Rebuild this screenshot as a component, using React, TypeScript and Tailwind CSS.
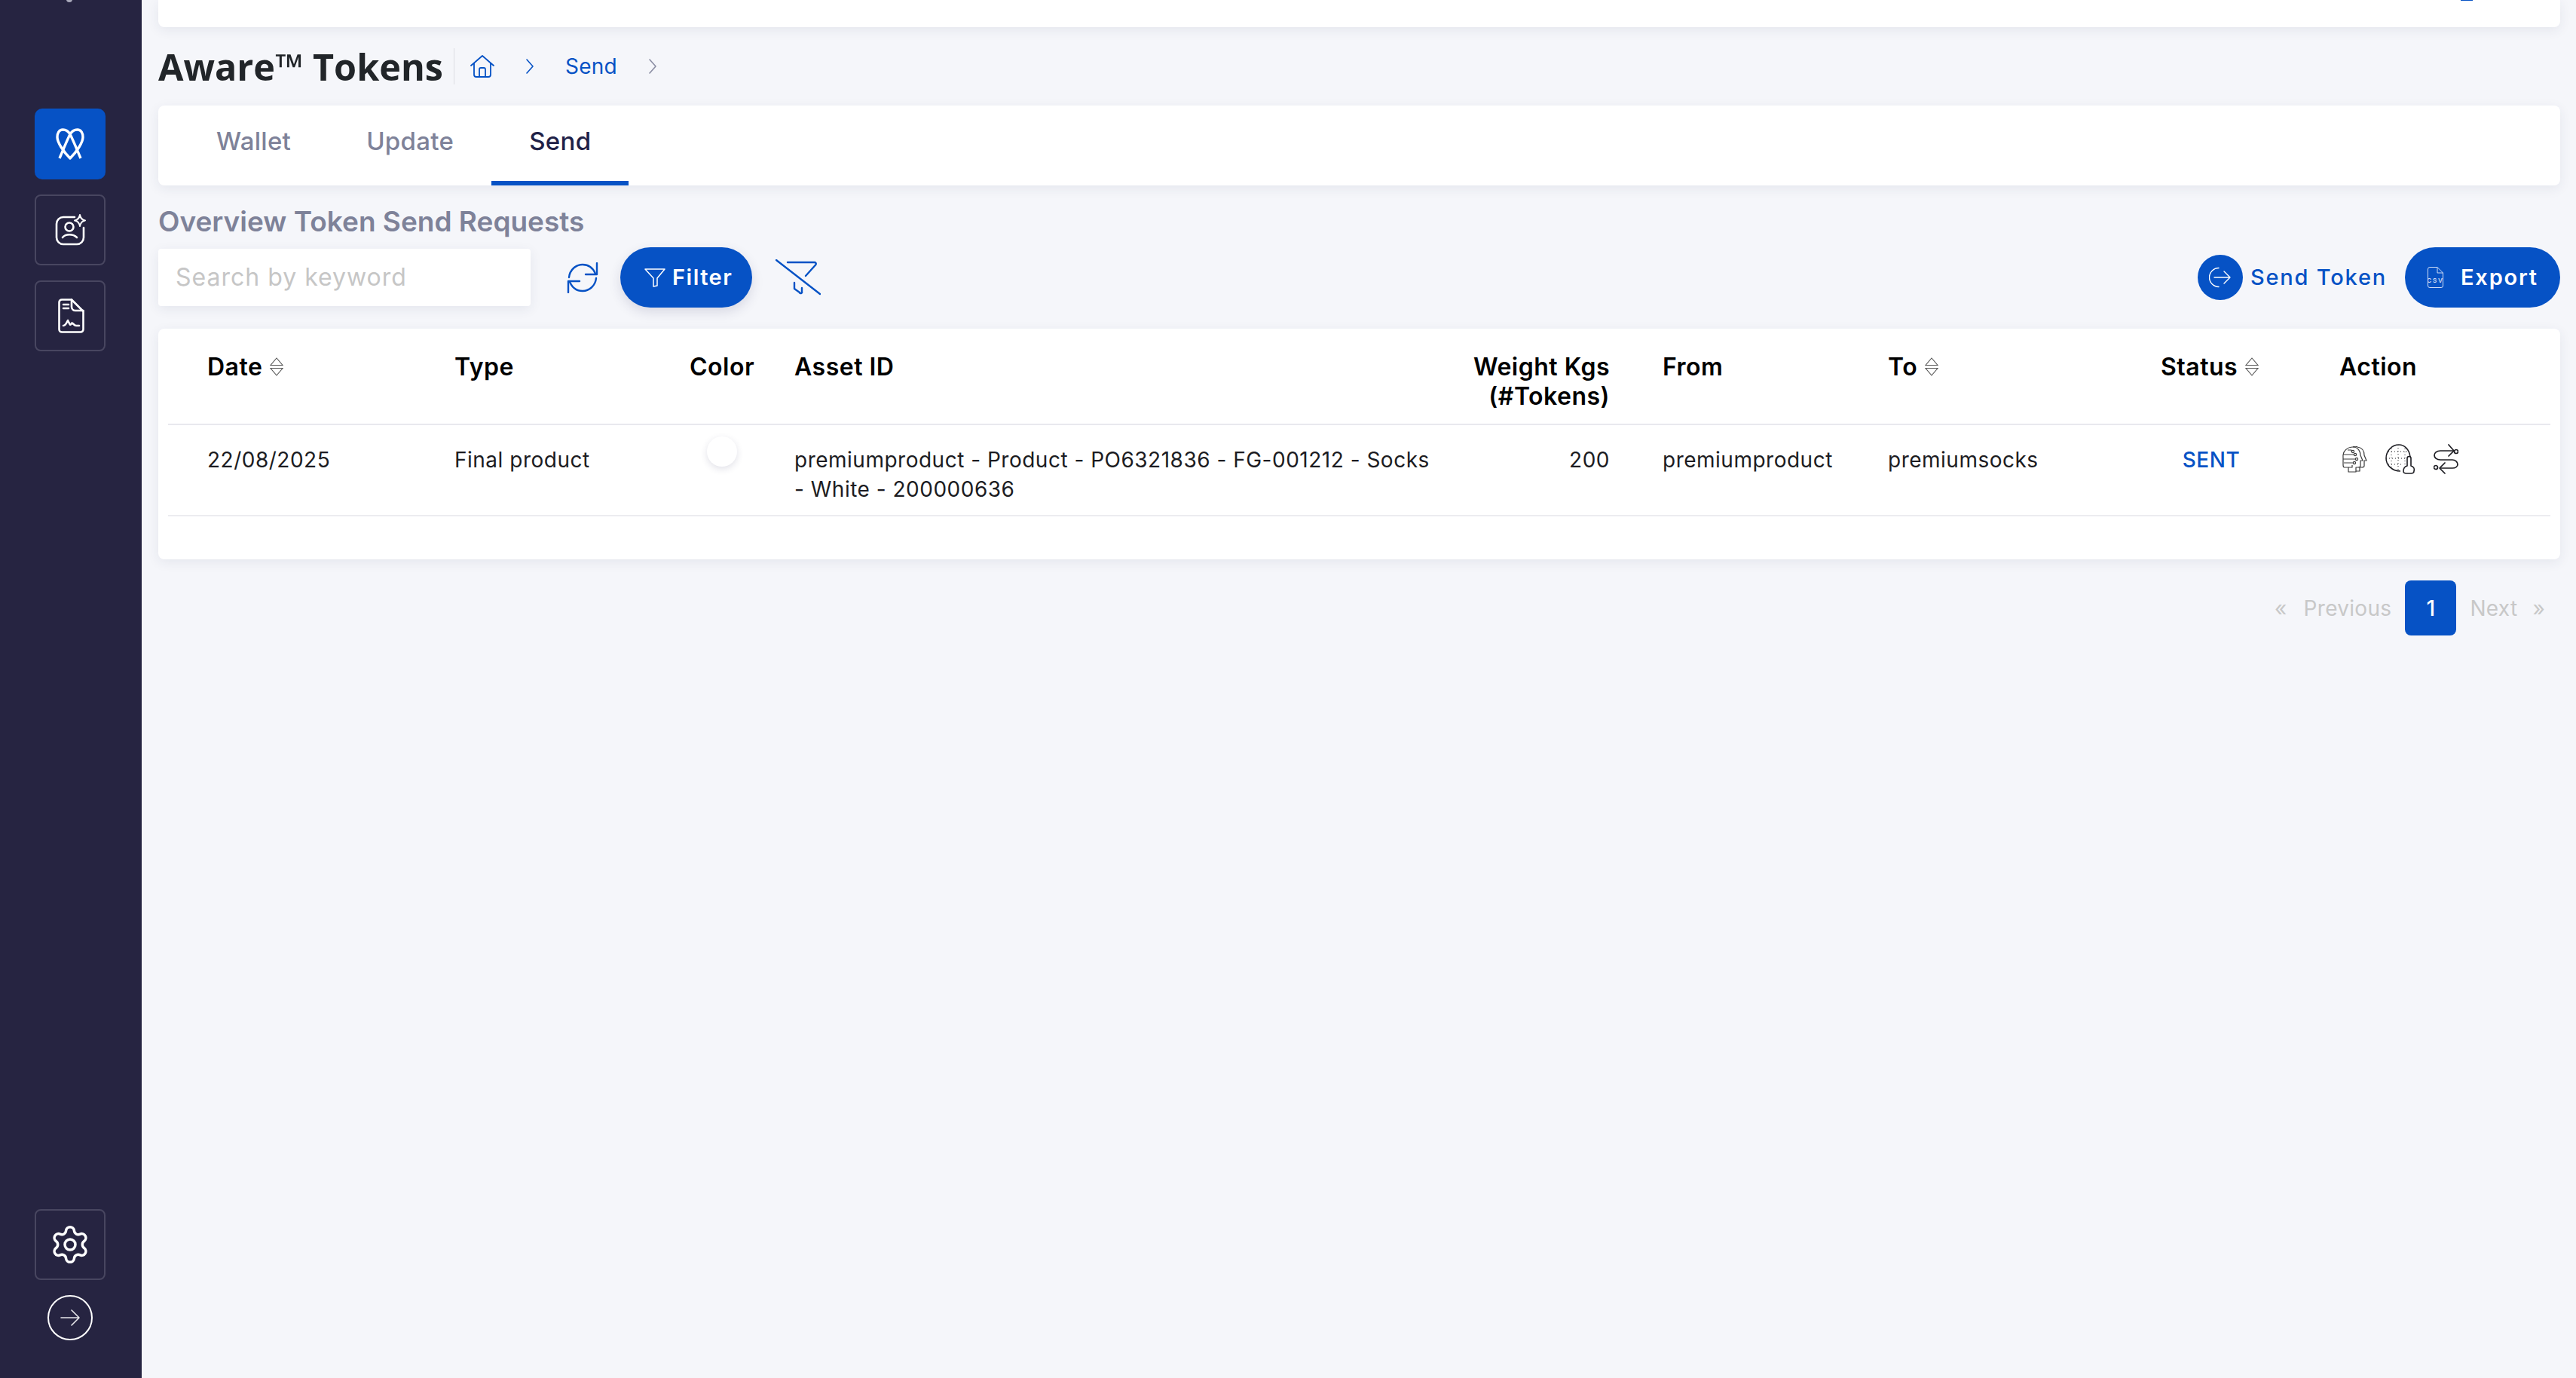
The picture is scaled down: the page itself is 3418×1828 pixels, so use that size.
const rowGrid = "grid grid-cols-[328px_312px_139px_850px_232px_70px_299px_362px_237px_1fr] pl-[52px]";

const Sort = () => (
  <svg viewBox="0 0 18 25" className="w-[18px] h-[25px] ml-[10px] shrink-0" fill="none" stroke="#555" strokeWidth="1.100">
    <path d="M9 1 L17 10.500 H1 Z" />
    <path d="M1 14.500 H17 L9 24 Z" />
  </svg>
);

const SideBox = ({ children, active }: { children: React.ReactNode; active?: boolean }) => (
  <div className={active ? "w-[94px] h-[94px] rounded-[10px] bg-[#0652c5] flex items-center justify-center" : "w-[94px] h-[94px] rounded-[8px] border-2 border-[#484660] flex items-center justify-center"}>
    {children}
  </div>
);

const Chevron = ({ color }: { color: string }) => (
  <svg viewBox="0 0 10 20" className="w-[10px] h-[20px]" fill="none" stroke={color} strokeWidth="1.600" strokeLinecap="round" strokeLinejoin="round">
    <path d="M1 1 L9 10 L1 19" />
  </svg>
);

const Th = ({ children, sort, className = "" }: { children: React.ReactNode; sort?: boolean; className?: string }) => (
  <div className={"flex items-start text-[32px] leading-[39px] font-semibold tracking-[0.5px] text-black " + className}>
    <span>{children}</span>
    {sort && <span className="h-[39px] flex items-center"><Sort /></span>}
  </div>
);

export default function App() {
  return (
    <div className="flex w-[3418px] h-[1828px] overflow-hidden bg-[#f5f6fa] font-['Inter',sans-serif]">
      <aside className="w-[188px] h-full bg-[#262441] flex flex-col items-center pt-[144px] pb-[50px] pr-[2px] relative shrink-0">
        <span className="absolute left-[88px] top-[-1px] w-[8px] h-[4px] rounded-b-full bg-[#aaaabb]" />
        <div className="flex flex-col gap-[20px]">
          <SideBox active>
            <svg viewBox="0 0 38 42" className="w-[38px] h-[42px]" fill="none" stroke="#fff" strokeWidth="3.400" strokeLinejoin="round">
              <path d="M19 8 C16 3 12 2 9.500 2 C4 2 2 7 2 12 C2 19 10 31 19 40 C28 31 36 19 36 12 C36 7 34 2 28.500 2 C26 2 22 3 19 8" />
              <path d="M19 8 C22 14 28 28 33 40" />
              <path d="M19 8 C16 14 10 28 5 40" />
            </svg>
          </SideBox>
          <SideBox>
            <svg viewBox="0 0 42 42" className="w-[42px] h-[42px]" fill="none" stroke="#fff" strokeWidth="2.600" strokeLinecap="round">
              <path d="M27 4 H12 a9 9 0 0 0 -9 9 v18 a9 9 0 0 0 9 9 h18 a9 9 0 0 0 9 -9 V18" />
              <circle cx="20" cy="17" r="5.500" />
              <path d="M11 31 C15 26 25 26 30 31" />
              <path d="M34 1 C35 6 37 8 41 8.500 C37 9 35 11 34 16 C33 11 31 9 27 8.500 C31 8 33 6 34 1 Z" strokeWidth="2" strokeLinejoin="round" />
            </svg>
          </SideBox>
          <SideBox>
            <svg viewBox="0 0 35 46" className="w-[35px] h-[46px] ml-[3px]" fill="none" stroke="#fff" strokeWidth="2.600" strokeLinecap="round" strokeLinejoin="round">
              <path d="M5 1.500 H18 L33.500 17 V41 a3.500 3.500 0 0 1 -3.500 3.500 H5 a3.500 3.500 0 0 1 -3.500 -3.500 V5 a3.500 3.500 0 0 1 3.500 -3.500" />
              <path d="M18 1.500 V11 a5 5 0 0 0 5 5 H33.500" />
              <path d="M7 8 H14 M7 13 H14" />
              <path d="M7 36 C10 36 11 33 13 29 C15 33 16 37 18 33 C19 31 21 36 24 36 H28" />
            </svg>
          </SideBox>
        </div>
        <div className="mt-auto flex flex-col items-center gap-[20px]">
          <SideBox>
            <svg viewBox="0 0 24 24" className="w-[56px] h-[56px]" fill="none" stroke="#fff" strokeWidth="1.500" strokeLinecap="round" strokeLinejoin="round">
              <path d="M9.671 4.136a2.34 2.34 0 0 1 4.659 0 2.34 2.34 0 0 0 3.319 1.915 2.34 2.34 0 0 1 2.33 4.033 2.34 2.34 0 0 0 0 3.831 2.34 2.34 0 0 1-2.33 4.033 2.34 2.34 0 0 0-3.319 1.915 2.34 2.34 0 0 1-4.659 0 2.34 2.34 0 0 0-3.32-1.915 2.34 2.34 0 0 1-2.33-4.033 2.34 2.34 0 0 0 0-3.831A2.34 2.34 0 0 1 6.35 6.051a2.34 2.34 0 0 0 3.319-1.915" />
              <circle cx="12" cy="12" r="3" />
            </svg>
          </SideBox>
          <div className="w-[60px] h-[60px] rounded-full border-2 border-white flex items-center justify-center">
            <svg viewBox="0 0 26 22" className="w-[26px] h-[22px]" fill="none" stroke="#e6e6ea" strokeWidth="1.600" strokeLinecap="round" strokeLinejoin="round">
              <path d="M1 11 H25 M15 1 L25 11 L15 21" />
            </svg>
          </div>
        </div>
      </aside>

      <main className="flex-1 pl-[22px] pr-[21px] flex flex-col min-w-0">
        <div className="h-[36px] bg-white rounded-b-[8px] shadow-[0_4px_16px_rgba(40,45,90,0.08)] relative">
          <span className="absolute left-[3055px] top-0 w-[16px] h-[1px] bg-[#0652c5]" />
        </div>

        <div className="h-[104px] flex items-center">
          <h1 className="font-['Open_Sans',sans-serif] font-bold text-[48.500px] leading-none text-[#212529]">Aware™ Tokens</h1>
          <div className="ml-[14px] w-[1px] h-[48px] bg-[#dcdde3]" />
          <svg viewBox="0 0 32 30" className="w-[32px] h-[30px] ml-[21px]" fill="none" stroke="#0652c5" strokeWidth="1.800" strokeLinecap="round" strokeLinejoin="round">
            <path d="M1 14 L16 1 L31 14" />
            <path d="M5 11 V26 a3 3 0 0 0 3 3 H24 a3 3 0 0 0 3 -3 V11" />
            <path d="M12 29 V19 a2 2 0 0 1 2 -2 h4 a2 2 0 0 1 2 2 V29" />
          </svg>
          <span className="ml-[42px]"><Chevron color="#0652c5" /></span>
          <span className="ml-[42px] text-[28px] tracking-[0.3px] text-[#0652c5]">Send</span>
          <span className="ml-[42px]"><Chevron color="#8a8da3" /></span>
        </div>

        <div className="h-[106px] bg-white rounded-[8px] shadow-[0_4px_16px_rgba(40,45,90,0.08)] flex pl-[27px]">
          {["Wallet", "Update", "Send"].map((t) => (
            <div key={t} className={t === "Send" ? "px-[50px] h-full flex items-center pb-[4px] border-b-[6px] border-[#0652c5] text-[#1f2147] text-[33px] tracking-[0.3px] font-medium" : "px-[50px] h-full flex items-center pb-[4px] border-b-[6px] border-transparent text-[#7e8299] text-[33px] tracking-[0.3px] font-medium"}>
              {t}
            </div>
          ))}
        </div>

        <h2 className="mt-[26px] text-[37px] leading-[44px] font-semibold text-[#7e8299]">Overview Token Send Requests</h2>

        <div className="mt-[12px] h-[80px] flex items-center">
          <div className="w-[494px] h-[76px] bg-white rounded-[4px] shadow-[0_4px_16px_rgba(40,45,90,0.08)] flex items-center pl-[23px] text-[32px] tracking-[1px] text-[#c6c6c6]">Search by keyword</div>
          <svg viewBox="0 0 42 41" className="w-[42px] h-[41px] ml-[48px]" fill="none" stroke="#0652c5" strokeWidth="2.400" strokeLinecap="round" strokeLinejoin="round">
            <path d="M3 20 C4 10 12 3 21 3 C29 3 35 8 38 15" />
            <path d="M40 1 V16 H25" />
            <path d="M2 40 V25 H17" />
            <path d="M39 21 C38 31 30 38 21 38 C13 38 7 33 4 26" />
          </svg>
          <button className="ml-[29px] w-[175px] h-[80px] rounded-full bg-[#0652c5] shadow-[0_6px_16px_rgba(40,45,90,0.14)] flex items-center pl-[32px] text-white text-[29px] font-semibold tracking-[1.500px]">
            <svg viewBox="0 0 28 25" className="w-[28px] h-[25px] mr-[9px]" fill="none" stroke="#fff" strokeWidth="1.500" strokeLinejoin="round">
              <path d="M1 1 H27 L17 13 V23 L12 24 V13 Z" />
            </svg>
            Filter
          </button>
          <svg viewBox="0 0 60 48" className="w-[60px] h-[48px] ml-[31px]" fill="none" stroke="#0652c5" strokeWidth="2.400" strokeLinecap="round" strokeLinejoin="round">
            <path d="M1 1 L59 46" />
            <path d="M16 4 H52 a2 2 0 0 1 1.500 3 L40 22" />
            <path d="M25 31 V39 L32 44 a1.500 1.500 0 0 0 3 -1 V38" />
          </svg>
          <div className="ml-auto flex items-center">
            <span className="w-[60px] h-[60px] rounded-full bg-[#0652c5] flex items-center justify-center">
              <svg viewBox="0 0 30 28" className="w-[30px] h-[28px]" fill="none" stroke="#fff" strokeWidth="1.400" strokeLinecap="round" strokeLinejoin="round">
                <path d="M13 1.500 A12.500 12.500 0 1 0 13 26.500" />
                <path d="M7 14 H28 M20 6 L28 14 L20 22" />
              </svg>
            </span>
            <span className="ml-[10px] text-[29px] font-medium tracking-[1.800px] text-[#0652c5]">Send Token</span>
            <button className="ml-[24px] w-[206px] h-[80px] rounded-full bg-[#0652c5] flex items-center pl-[30px] text-white text-[29px] font-semibold tracking-[1.800px]">
              <svg viewBox="0 0 21 28" className="w-[21px] h-[28px] mr-[23px]" fill="none" stroke="#cfdcf5" strokeWidth="1" strokeLinejoin="round">
                <path d="M3 .5 H13 L20.500 8 V25 a2.500 2.500 0 0 1 -2.500 2.500 H3 a2.500 2.500 0 0 1 -2.500 -2.500 V3 a2.500 2.500 0 0 1 2.500 -2.500" />
                <path d="M13 .5 V8 H20.500" />
                <text x="10.500" y="21" fontSize="8" fill="#cfdcf5" stroke="none" textAnchor="middle" fontFamily="Inter">CSV</text>
              </svg>
              Export
            </button>
          </div>
        </div>

        <section className="mt-[28px] h-[306px] bg-white rounded-[8px] shadow-[0_4px_16px_rgba(40,45,90,0.08)] px-[13px]">
          <div className={rowGrid + " h-[128px] pt-[31px] border-b-2 border-[#e9e9ee]"}>
            <Th sort>Date</Th>
            <Th>Type</Th>
            <Th>Color</Th>
            <Th>Asset ID</Th>
            <Th className="justify-end text-right"><>Weight Kgs<br />(#Tokens)</></Th>
            <div />
            <Th>From</Th>
            <Th sort>To</Th>
            <Th sort>Status</Th>
            <Th>Action</Th>
          </div>
          <div className={rowGrid + " h-[121px] pt-[27px] border-b-2 border-[#ececf0] text-[28px] leading-[39px] tracking-[0.5px] text-[#1c1c22]"}>
            <div>22/08/2025</div>
            <div>Final product</div>
            <div className="pl-[23px]"><div className="mt-[-12px] w-[40px] h-[40px] rounded-full bg-white shadow-[0_3px_10px_rgba(40,45,90,0.14)]" /></div>
            <div className="pr-[2px]">premiumproduct - Product - PO6321836 - FG-001212 - Socks - White - 200000636</div>
            <div className="text-right">200</div>
            <div />
            <div>premiumproduct</div>
            <div>premiumsocks</div>
            <div className="w-[134px] text-center text-[#0652c5] font-medium">SENT</div>
            <div className="flex items-start gap-[24px] mt-[-2px] pl-[3px]">
              <svg viewBox="0 0 34 35" className="w-[34px] h-[35px] mt-[3px]" fill="none" stroke="#3a3a3a" strokeWidth="1.200" strokeLinejoin="round">
                <path d="M9 34 V28 H4 C2 28 2 26 2 24 V15 C1 6 8 1 15 1 C22 1 25 7 25 12 L28 19 H25 V26 C25 28 23 28 21 28 H19 V34 Z" />
                <path d="M15 1 C17 0 19 0 21 1 C28 2 30 7 30 12 L33 19 H30 V26 C30 28 28 28 26 28 H24 V33 H19" />
                <path d="M2 11 H16 M2 17 H18 M3 22 H15 M8 5 H13 V7 M9 28 H14 V25" />
                <circle cx="15" cy="7" r="1.600" /><circle cx="18" cy="11" r="1.600" /><circle cx="20" cy="17" r="1.600" /><circle cx="17" cy="22" r="1.600" />
              </svg>
              <svg viewBox="0 0 40 40" className="w-[40px] h-[40px]" fill="none" stroke="#1c1c22" strokeWidth="1.500" strokeLinejoin="round">
                <path d="M33 17 C32 8 26 1 18 1 C9 1 1 9 1 19 C1 28 9 36 20 36" />
                <path d="M1 19 H28 M17 1 V36" strokeWidth="1" strokeDasharray="1 3" />
                <path d="M8 6 V32 M26 6 V28 M4 10 H30 M4 27 H24" strokeWidth="1" strokeDasharray="1 3" />
                <path d="M29 29 V19 a2.500 2.500 0 0 1 5 0 V29 C38 30 39 33 38 36 C38 38 36 39 34 39 H28 C26 39 24 38 24 36 C24 33 25 30 29 29 Z" strokeWidth="1.600" />
              </svg>
              <svg viewBox="0 0 33 40" className="w-[33px] h-[40px]" fill="none" stroke="#1c1c22" strokeWidth="1.700" strokeLinecap="round" strokeLinejoin="round">
                <path d="M20 1 L27 9 L20 16" />
                <path d="M26 9 H9 C4 9 1 12 1 15 C1 18 4 21 9 21 H25 C29 21 32 24 32 27 C32 30 29 32 25 32 H9" />
                <path d="M15 25 L8 32 L15 39" />
                <circle cx="30" cy="10" r="2.500" />
                <circle cx="3" cy="31" r="2.500" />
              </svg>
            </div>
          </div>
        </section>

        <nav className="mt-[28px] flex items-center justify-end text-[28px] tracking-[0.3px] text-[#c8c8c8]">
          <span>«</span>
          <span className="ml-[22px]">Previous</span>
          <span className="ml-[18px] w-[68px] h-[73px] rounded-[8px] bg-[#0652c5] text-white font-medium flex items-center justify-center">1</span>
          <span className="ml-[18px]">Next</span>
          <span className="ml-[20px] mr-[20px]">»</span>
        </nav>
      </main>
    </div>
  );
}
